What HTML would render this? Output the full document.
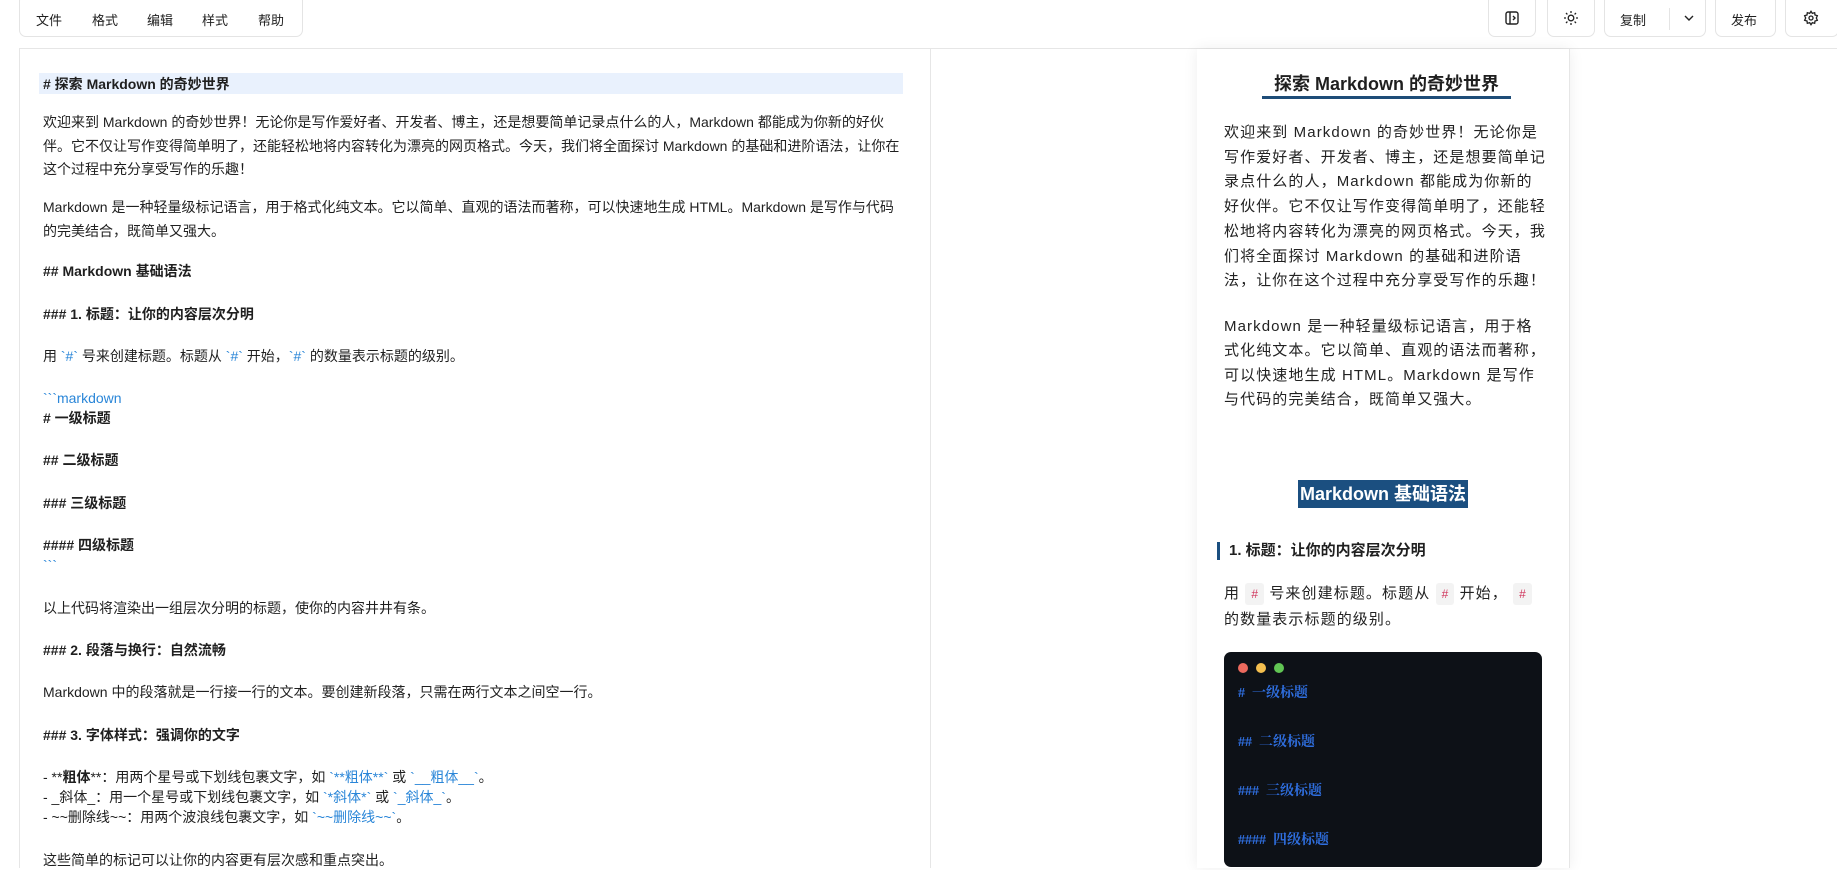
<!DOCTYPE html>
<html><head><meta charset="utf-8"><style>
*{margin:0;padding:0;box-sizing:border-box}
body{width:1837px;height:868px;overflow:hidden;background:#fff;font-family:"Liberation Sans","Noto Sans CJK SC",sans-serif;color:#1f1f1f;position:relative}
.box{position:absolute;top:-6px;height:43px;border:1px solid #e4e4e4;border-radius:7px;background:#fff}
.mi{position:absolute;top:10px;font-size:13px}
.ln{position:absolute;left:43px;font-size:14px;line-height:20px;white-space:nowrap;transform:translateY(-10px)}
.b{font-weight:bold}
.c{color:#2a86d8}
.pp{position:absolute;left:1224px;font-size:15px;letter-spacing:1.1px;line-height:20px;white-space:nowrap;transform:translateY(-10px);color:#222}
.ic{display:inline-block;background:#f3f3f3;color:#d0355c;font-size:12px;padding:1px 6px;border-radius:3px;letter-spacing:0}
.cl{position:absolute;left:1238px;color:#2f6fe0;font-weight:bold;font-size:14px;font-family:"Liberation Serif","Noto Serif CJK SC",serif;transform:translateY(-10px);line-height:20px}
</style></head><body>
<div class="box" style="left:19px;width:284px"></div>
<div class="mi" style="left:36px">文件</div>
<div class="mi" style="left:92px">格式</div>
<div class="mi" style="left:147px">编辑</div>
<div class="mi" style="left:202px">样式</div>
<div class="mi" style="left:258px">帮助</div>

<div class="box" style="left:1488px;width:48px"></div>
<svg style="position:absolute;left:1504px;top:10px" width="16" height="16" viewBox="0 0 16 16" fill="none" stroke="#222" stroke-width="1.4"><rect x="2" y="2" width="12" height="12" rx="2"/><line x1="6" y1="2" x2="6" y2="14"/><polyline points="9,6 11,8 9,10"/></svg>
<div class="box" style="left:1547px;width:48px"></div>
<svg style="position:absolute;left:1563px;top:10px" width="16" height="16" viewBox="0 0 16 16" fill="none" stroke="#222" stroke-width="1.3"><circle cx="8" cy="8" r="2.8"/><path d="M8 1v2M8 13v2M1 8h2M13 8h2M3 3l1.4 1.4M11.6 11.6L13 13M3 13l1.4-1.4M11.6 4.4L13 3"/></svg>
<div class="box" style="left:1604px;width:102px"></div>
<div class="mi" style="left:1620px;top:10px">复制</div>
<div style="position:absolute;left:1669px;top:8px;width:1px;height:22px;background:#e4e4e4"></div>
<svg style="position:absolute;left:1683px;top:13px" width="12" height="10" viewBox="0 0 12 10" fill="none" stroke="#222" stroke-width="1.4"><polyline points="2,3 6,7 10,3"/></svg>
<div class="box" style="left:1715px;width:61px"></div>
<div class="mi" style="left:1731px;top:10px">发布</div>
<div class="box" style="left:1785px;width:54px"></div>
<svg style="position:absolute;left:1803px;top:10px" width="16" height="16" viewBox="0 0 24 24" fill="none" stroke="#222" stroke-width="2"><circle cx="12" cy="12" r="3"/><path d="M12 2l2 3 3.5-1 .5 3.5 3.5 1-1.5 3.5 1.5 3.5-3.5 1-.5 3.5-3.5-1-2 3-2-3-3.5 1-.5-3.5-3.5-1L4 12 2.5 8.5 6 7.5 6.5 4 10 5z"/></svg>

<div style="position:absolute;left:19px;top:48px;width:1818px;height:1px;background:#e6e6e6"></div>
<div style="position:absolute;left:19px;top:48px;width:1px;height:820px;background:#e6e6e6"></div>
<div style="position:absolute;left:930px;top:48px;width:1px;height:820px;background:#e6e6e6"></div>

<div style="position:absolute;left:39px;top:73px;width:864px;height:21px;background:#e9f1fd"></div>
<div class="ln b" style="top:84px">#&nbsp;探索 Markdown 的奇妙世界</div>
<div class="ln" style="top:122px">欢迎来到 Markdown 的奇妙世界！无论你是写作爱好者、开发者、博主，还是想要简单记录点什么的人，Markdown 都能成为你新的好伙</div>
<div class="ln" style="top:146px">伴。它不仅让写作变得简单明了，还能轻松地将内容转化为漂亮的网页格式。今天，我们将全面探讨 Markdown 的基础和进阶语法，让你在</div>
<div class="ln" style="top:169px">这个过程中充分享受写作的乐趣！</div>
<div class="ln" style="top:207px">Markdown 是一种轻量级标记语言，用于格式化纯文本。它以简单、直观的语法而著称，可以快速地生成 HTML。Markdown 是写作与代码</div>
<div class="ln" style="top:231px">的完美结合，既简单又强大。</div>
<div class="ln b" style="top:271px">## Markdown 基础语法</div>
<div class="ln b" style="top:314px">### 1. 标题：让你的内容层次分明</div>
<div class="ln" style="top:356px">用 <span class="c">&#96;#&#96;</span> 号来创建标题。标题从 <span class="c">&#96;#&#96;</span> 开始，<span class="c">&#96;#&#96;</span> 的数量表示标题的级别。</div>
<div class="ln c" style="top:398px">&#96;&#96;&#96;markdown</div>
<div class="ln b" style="top:418px"># 一级标题</div>
<div class="ln b" style="top:460px">## 二级标题</div>
<div class="ln b" style="top:503px">### 三级标题</div>
<div class="ln b" style="top:545px">#### 四级标题</div>
<div class="ln c" style="top:565px">&#96;&#96;&#96;</div>
<div class="ln" style="top:608px">以上代码将渲染出一组层次分明的标题，使你的内容井井有条。</div>
<div class="ln b" style="top:650px">### 2. 段落与换行：自然流畅</div>
<div class="ln" style="top:692px">Markdown 中的段落就是一行接一行的文本。要创建新段落，只需在两行文本之间空一行。</div>
<div class="ln b" style="top:735px">### 3. 字体样式：强调你的文字</div>
<div class="ln" style="top:777px">- **<b>粗体</b>**：用两个星号或下划线包裹文字，如 <span class="c">&#96;**粗体**&#96;</span> 或 <span class="c">&#96;__粗体__&#96;</span>。</div>
<div class="ln" style="top:797px">- _斜体_：用一个星号或下划线包裹文字，如 <span class="c">&#96;*斜体*&#96;</span> 或 <span class="c">&#96;_斜体_&#96;</span>。</div>
<div class="ln" style="top:817px">- ~~删除线~~：用两个波浪线包裹文字，如 <span class="c">&#96;~~删除线~~&#96;</span>。</div>
<div class="ln" style="top:860px">这些简单的标记可以让你的内容更有层次感和重点突出。</div>

<div style="position:absolute;left:1197px;top:49px;width:373px;height:819px;background:#fff;box-shadow:0 0 14px rgba(0,0,0,.07);border-right:1px solid #e6e6e6"></div>
<div style="position:absolute;left:1262px;top:72px;width:249px;text-align:center;font-weight:bold;font-size:18px;line-height:24px">探索 Markdown 的奇妙世界</div>
<div style="position:absolute;left:1262px;top:96px;width:249px;height:3px;background:#1e4d78"></div>
<div class="pp" style="top:133px">欢迎来到 Markdown 的奇妙世界！无论你是</div>
<div class="pp" style="top:158px">写作爱好者、开发者、博主，还是想要简单记</div>
<div class="pp" style="top:182px">录点什么的人，Markdown 都能成为你新的</div>
<div class="pp" style="top:207px">好伙伴。它不仅让写作变得简单明了，还能轻</div>
<div class="pp" style="top:232px">松地将内容转化为漂亮的网页格式。今天，我</div>
<div class="pp" style="top:257px">们将全面探讨 Markdown 的基础和进阶语</div>
<div class="pp" style="top:281px">法，让你在这个过程中充分享受写作的乐趣！</div>
<div class="pp" style="top:327px">Markdown 是一种轻量级标记语言，用于格</div>
<div class="pp" style="top:351px">式化纯文本。它以简单、直观的语法而著称，</div>
<div class="pp" style="top:376px">可以快速地生成 HTML。Markdown 是写作</div>
<div class="pp" style="top:400px">与代码的完美结合，既简单又强大。</div>
<div style="position:absolute;left:1298px;top:480px;width:170px;height:28px;background:#1b4f80;color:#fff;font-weight:bold;font-size:18px;line-height:28px;text-align:center">Markdown 基础语法</div>
<div style="position:absolute;left:1217px;top:542px;width:3px;height:18px;background:#1b4f80"></div>
<div style="position:absolute;left:1229px;top:541px;font-weight:bold;font-size:15px;line-height:20px">1. 标题：让你的内容层次分明</div>
<div class="pp" style="top:593px">用 <span class="ic">#</span> 号来创建标题。标题从 <span class="ic">#</span> 开始， <span class="ic">#</span></div>
<div class="pp" style="top:620px">的数量表示标题的级别。</div>
<div style="position:absolute;left:1224px;top:652px;width:318px;height:215px;background:#0d1117;border-radius:7px"></div>
<div style="position:absolute;left:1238px;top:663px;width:10px;height:10px;border-radius:50%;background:#ec6a5e"></div>
<div style="position:absolute;left:1256px;top:663px;width:10px;height:10px;border-radius:50%;background:#f4bf4f"></div>
<div style="position:absolute;left:1274px;top:663px;width:10px;height:10px;border-radius:50%;background:#61c554"></div>
<div class="cl" style="top:694px"># &nbsp;一级标题</div>
<div class="cl" style="top:743px">## &nbsp;二级标题</div>
<div class="cl" style="top:792px">### &nbsp;三级标题</div>
<div class="cl" style="top:841px">#### &nbsp;四级标题</div>
</body></html>
